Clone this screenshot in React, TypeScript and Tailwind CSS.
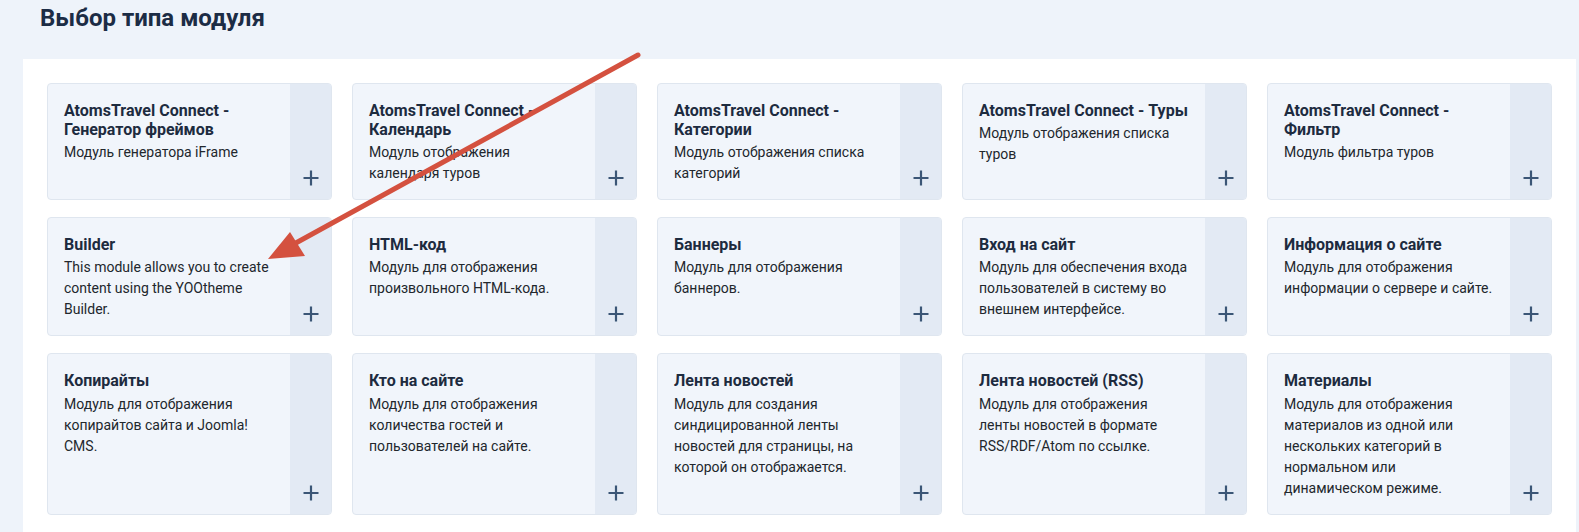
const modules = [
  { title: "AtomsTravel Connect - Генератор фреймов", desc: "Модуль генератора iFrame" },
  { title: "AtomsTravel Connect - Календарь", desc: "Модуль отображения календаря туров" },
  { title: "AtomsTravel Connect - Категории", desc: "Модуль отображения списка категорий" },
  { title: "AtomsTravel Connect - Туры", desc: "Модуль отображения списка туров" },
  { title: "AtomsTravel Connect - Фильтр", desc: "Модуль фильтра туров" },
  { title: "Builder", desc: "This module allows you to create content using the YOOtheme Builder." },
  { title: "HTML-код", desc: "Модуль для отображения произвольного HTML-кода." },
  { title: "Баннеры", desc: "Модуль для отображения баннеров." },
  { title: "Вход на сайт", desc: "Модуль для обеспечения входа пользователей в систему во внешнем интерфейсе." },
  { title: "Информация о сайте", desc: "Модуль для отображения информации о сервере и сайте." },
  { title: "Копирайты", desc: "Модуль для отображения копирайтов сайта и Joomla! CMS." },
  { title: "Кто на сайте", desc: "Модуль для отображения количества гостей и пользователей на сайте." },
  { title: "Лента новостей", desc: "Модуль для создания синдицированной ленты новостей для страницы, на которой он отображается." },
  { title: "Лента новостей (RSS)", desc: "Модуль для отображения ленты новостей в формате RSS/RDF/Atom по ссылке." },
  { title: "Материалы", desc: "Модуль для отображения материалов из одной или нескольких категорий в нормальном или динамическом режиме." },
];

function PlusIcon() {
  return (
    <svg width="16" height="16" viewBox="0 0 16 16" aria-hidden="true">
      <path d="M8 0.5v15M0.5 8h15" stroke="#3b5676" strokeWidth="2.2" fill="none" />
    </svg>
  );
}

function ModuleCard({ title, desc }: { title: string; desc: string }) {
  return (
    <div className="flex rounded-[4px] border border-[#dfe6ef] bg-[#f1f5fb] overflow-hidden">
      <div className="flex-1 pl-4 pr-[14px] pt-[17px] pb-[15px]">
        <div className="text-[16px] leading-[1.2] font-bold text-[#1d2b3f]">{title}</div>
        <div className="mt-[3px] text-[14px] leading-[21px] text-[#22272d]">{desc}</div>
      </div>
      <div className="w-[41px] shrink-0 bg-[#e3eaf4] flex flex-col justify-end items-center pb-[13px]">
        <PlusIcon />
      </div>
    </div>
  );
}

export default function App() {
  return (
    <div
      className="relative min-h-[532px] bg-[#eef3fa] overflow-hidden pt-[4px]"
      style={{ fontFamily: "Roboto, 'Noto Sans', sans-serif" }}
    >
      <h1 className="pl-10 text-[24px] leading-[1.2] font-bold text-[#1c2c45]">Выбор типа модуля</h1>

      <div className="ml-[23px] mr-[3px] mt-[26px] bg-white p-6 min-h-[480px]">
        <div className="grid grid-cols-5 gap-x-5 gap-y-[17px]">
          {modules.map((m) => (
            <ModuleCard key={m.title} title={m.title} desc={m.desc} />
          ))}
        </div>
      </div>

      {/* annotation arrow */}
      <svg
        className="pointer-events-none absolute left-0 top-0"
        width="1579"
        height="532"
        aria-hidden="true"
      >
        <line x1="638" y1="55" x2="294" y2="244" stroke="#d4513f" strokeWidth="5" strokeLinecap="round" />
        <polygon points="268,259 290,232 305,256" fill="#d4513f" />
      </svg>
    </div>
  );
}
